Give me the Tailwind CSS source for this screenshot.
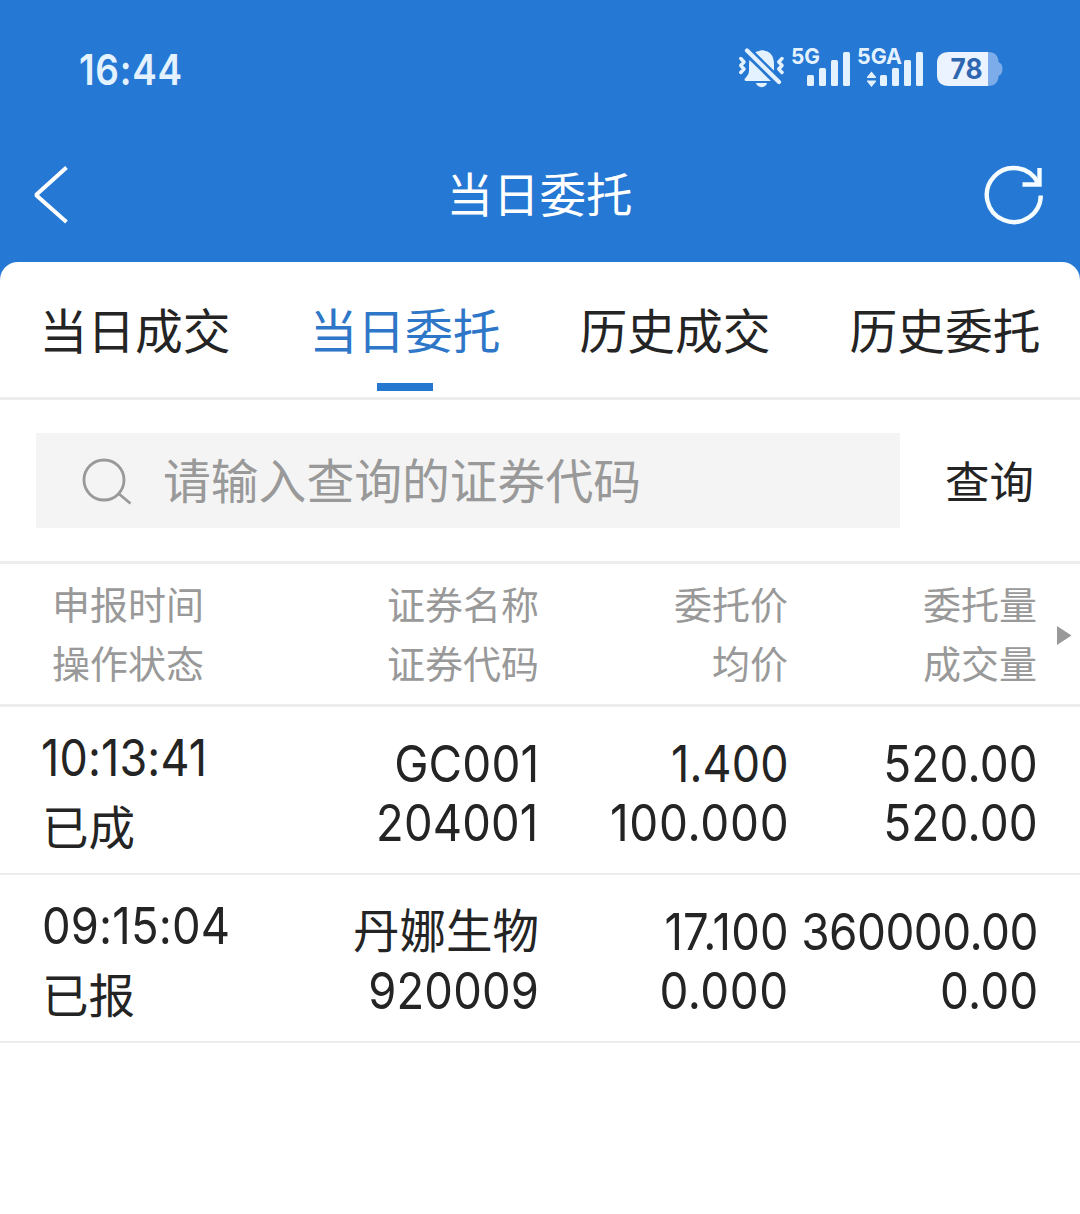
<!DOCTYPE html>
<html lang="zh-CN">
<head>
  <meta charset="UTF-8" />
  <meta name="viewport" content="width=device-width, initial-scale=1" />
  <title>当日委托</title>
  <script src="https://cdn.jsdelivr.net/npm/@tailwindcss/browser@4"></script>
</head>
<body class="bg-[#2578d3] min-h-screen flex flex-col text-[#242424] font-['Inter','Noto_Sans_CJK_SC',sans-serif] whitespace-nowrap overflow-hidden">

<header class="h-[262px] shrink-0 text-white">
  <!-- Status bar -->
  <div class="h-[138px] pl-[79px] pr-[72px] flex items-center justify-between text-[#e4f2ff]">
    <span class="pt-[1px] text-[42px] leading-none font-semibold tracking-[0.8px] origin-left scale-x-[0.88]">16:44</span>
    <svg class="w-[270px] h-[50px]" viewBox="738 44 270 50" fill="currentColor">
      <!-- muted bell -->
      <path d="M744.500 79.500c0-1.500 4.500-3.500 4.500-9V64c0-7 4.500-12 10-13 1.500-1 5-1 6.500 0C771 52 774 57 774 64v6.500c0 5 4 7 4 9 0 1-1 1.500-2 1.500h-29.500c-1 0-2-.5-2-1.500z" />
      <path d="M756 83h11c-1 5.500-10 5.500-11 0z" />
      <path d="M743.500 47.500l40 39" stroke="#2578d3" stroke-width="9.500" fill="none" />
      <path d="M747 50.500l32 31.500" stroke="currentColor" stroke-width="4.200" stroke-linecap="round" fill="none" />
      <path d="M740.800 58.500l3.200 3.500-3.200 3.500 3.200 3.500-3.200 3.500M782 58.500l-3.200 3.500 3.200 3.500-3.200 3.500 3.200 3.500" stroke="currentColor" stroke-width="3.400" stroke-linecap="round" stroke-linejoin="round" fill="none" />
      <!-- signal 1 -->
      <text x="791" y="63.500" font-size="22" font-weight="700" textLength="29" lengthAdjust="spacingAndGlyphs">5G</text>
      <rect x="807" y="75" width="7" height="11" rx="1.500" />
      <rect x="819" y="68" width="7" height="18" rx="1.500" />
      <rect x="831" y="60" width="7" height="26" rx="1.500" />
      <rect x="843" y="52" width="7" height="34" rx="1.500" />
      <!-- signal 2 -->
      <text x="857" y="63.500" font-size="22" font-weight="700" textLength="45" lengthAdjust="spacingAndGlyphs">5GA</text>
      <path d="M871.500 71.500l4.500 5.500v1h-9v-1zM871.500 87l4.500-5.500v-1h-9v1z" />
      <rect x="880" y="75" width="7" height="11" rx="1.500" />
      <rect x="892" y="68" width="7" height="18" rx="1.500" />
      <rect x="904" y="60" width="7" height="26" rx="1.500" />
      <rect x="916" y="52" width="7" height="34" rx="1.500" />
      <!-- battery -->
      <path d="M988 52c7 0 10.500 4 10.500 10 2.500 1 4 3.500 4 7s-1.500 6-4 7c0 6-3.500 10-10.500 10z" fill="#7cadea" />
      <path d="M949 52h39v34h-39c-8 0-12-4-12-11V63c0-7 4-11 12-11z" fill="#eaf3ff" />
      <text x="950.500" y="79" font-size="28" font-weight="700" fill="#2f66b0" textLength="32" lengthAdjust="spacingAndGlyphs">78</text>
    </svg>
  </div>

  <!-- Title bar -->
  <div class="h-[112px] pl-[32px] pr-[34px] grid grid-cols-[64px_1fr_64px] items-center">
    <svg class="w-[40px] h-[60px]" viewBox="0 0 40 60" fill="none" stroke="currentColor" stroke-width="4">
      <path d="M34.500 3.500L4 31l30.500 27" stroke-linejoin="bevel" />
    </svg>
    <h1 class="pl-[1px] pt-[3px] text-[46.500px] leading-none text-center">当日委托</h1>
    <svg class="w-[64px] h-[64px]" viewBox="982 162 64 64" fill="none" stroke="#f4fcff" stroke-width="4.400">
      <path d="M1040.800 195.500A27 27 0 1 1 1038 183" />
      <path d="M1022.500 184.500h17V168" />
    </svg>
  </div>
</header>

<main class="bg-white grow rounded-t-[18px]">
  <!-- Tabs -->
  <nav class="h-[138px] grid grid-cols-4 border-b-[3px] border-[#ededed] text-[47.800px]">
    <a href="#" class="flex flex-col items-center pt-[35px] leading-[70px]">当日成交</a>
    <a href="#" class="flex flex-col items-center pt-[35px] leading-[70px] text-[#2e77c8]">当日委托
      <span class="w-[56px] h-[8px] mt-[16px] bg-[#2577d0]"></span>
    </a>
    <a href="#" class="flex flex-col items-center pt-[35px] leading-[70px]">历史成交</a>
    <a href="#" class="flex flex-col items-center pt-[35px] leading-[70px]">历史委托</a>
  </nav>

  <!-- Search -->
  <div class="h-[164px] pl-[36px] flex items-center border-b-[3px] border-[#ededed]">
    <div class="w-[864px] h-[95px] pl-[44px] flex items-center bg-[#f4f4f4] text-[#999999]">
      <svg class="w-[52px] h-[52px]" viewBox="80 454 52 52" fill="none" stroke="currentColor" stroke-width="2.800">
        <circle cx="104" cy="479" r="20" />
        <path d="M118.500 492.500l12 10" />
      </svg>
      <span class="ml-[31px] pt-[5px] text-[47.800px] leading-none">请输入查询的证券代码</span>
    </div>
    <button class="ml-[45px] pt-[5px] text-[44.500px] leading-none">查询</button>
  </div>

  <!-- Table head -->
  <div class="relative h-[143px] pt-[12px] pl-[52px] grid grid-cols-[237px_250px_249px_249px] border-b-[3px] border-[#ededed] text-[38px] leading-[59px] text-[#999999] text-right">
    <div class="text-left">申报时间<br />操作状态</div>
    <div>证券名称<br />证券代码</div>
    <div>委托价<br />均价</div>
    <div>委托量<br />成交量</div>
    <svg class="absolute left-[1057px] top-[62px] w-[15px] h-[19px]" viewBox="0 0 15 19" fill="#999999"><path d="M0 0l14.500 9.500L0 19z" /></svg>
  </div>

  <!-- Orders -->
  <div class="h-[168px] pl-[41px] grid grid-cols-[248px_250px_250px_249px] border-b-2 border-[#ededed] text-[51px] tracking-[0.2px]">
    <div class="pt-[16px] leading-[70px]">
      <p class="origin-left scale-x-[0.88]">10:13:41</p>
      <p class="text-[46.500px] tracking-normal pl-[1px]">已成</p>
    </div>
    <div class="pt-[27px] leading-[59px] flex flex-col items-end">
      <p class="origin-right scale-x-[0.9]">GC001</p>
      <p class="origin-right scale-x-[0.89]">204001</p>
    </div>
    <div class="pt-[27px] leading-[59px] flex flex-col items-end">
      <p class="origin-right scale-x-[0.88]">1.400</p>
      <p class="origin-right scale-x-[0.9] tracking-[0.8px]">100.000</p>
    </div>
    <div class="pt-[27px] leading-[59px] flex flex-col items-end">
      <p class="origin-right scale-x-[0.9]">520.00</p>
      <p class="origin-right scale-x-[0.9]">520.00</p>
    </div>
  </div>
  <div class="h-[168px] pl-[41px] grid grid-cols-[248px_250px_250px_249px] border-b-2 border-[#ededed] text-[51px] tracking-[0.2px]">
    <div class="pt-[16px] leading-[70px]">
      <p class="pl-[1px] origin-left scale-x-[0.89]">09:15:04</p>
      <p class="text-[46.500px] tracking-normal pl-[1px]">已报</p>
    </div>
    <div class="pt-[27px] leading-[59px] flex flex-col items-end">
      <p class="text-[46.500px] tracking-normal">丹娜生物</p>
      <p class="origin-right scale-x-[0.89]">920009</p>
    </div>
    <div class="pt-[27px] leading-[59px] flex flex-col items-end">
      <p class="origin-right scale-x-[0.89]">17.100</p>
      <p class="origin-right scale-x-[0.9] tracking-[0.6px]">0.000</p>
    </div>
    <div class="pt-[27px] leading-[59px] flex flex-col items-end">
      <p class="origin-right scale-x-[0.9] tracking-[-0.6px]">360000.00</p>
      <p class="origin-right scale-x-[0.9] tracking-[0.2px]">0.00</p>
    </div>
  </div>
</main>
</body>
</html>
